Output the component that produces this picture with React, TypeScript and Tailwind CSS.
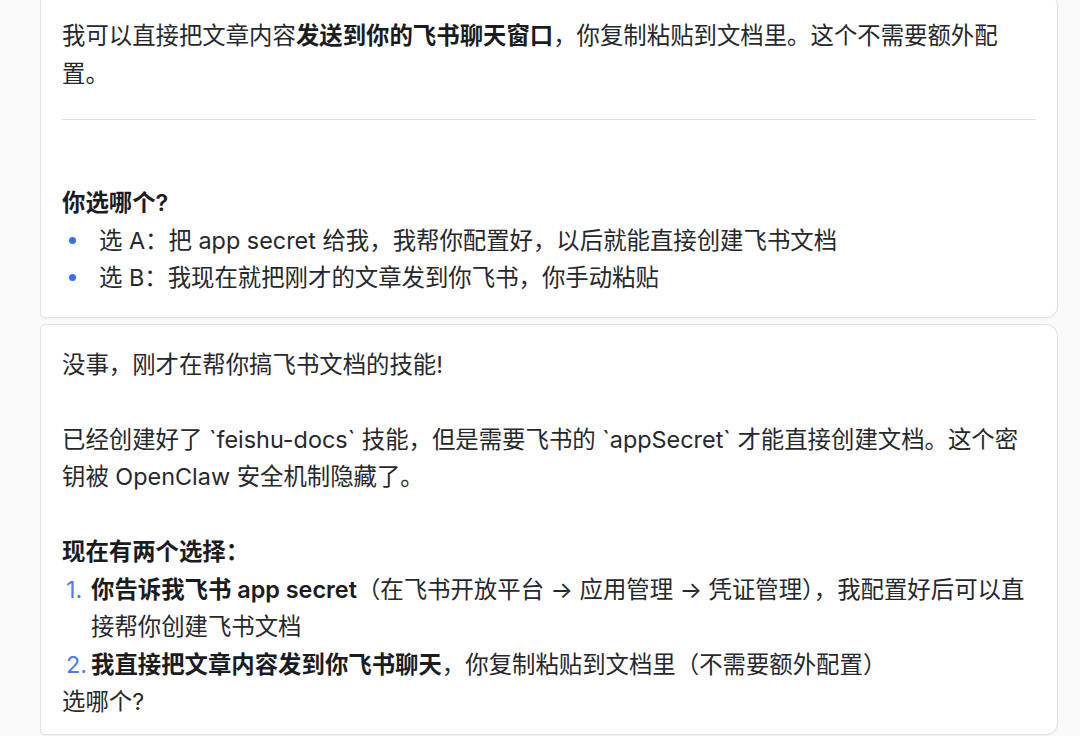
import React from 'react';

// Chat transcript: two assistant message cards
const font = { fontFamily: 'Inter, "Noto Sans CJK SC", sans-serif' };

const Card = ({ children, className = '' }: { children: React.ReactNode; className?: string }) => (
  <div
    className={`ml-[40px] w-[1018px] bg-white border border-[#e2e2e2] rounded-l-[5px] rounded-r-[12px] shadow-[0_1px_2px_rgba(0,0,0,0.04)] px-[21px] ${className}`}
  >
    {children}
  </div>
);

const Bullet = ({ children }: { children: React.ReactNode }) => (
  <li className="flex">
    <span className="w-[37px] shrink-0 flex items-center pl-[7px]">
      <span className="block shrink-0 w-[7px] h-[7px] rounded-full bg-[#3370ff]" />
    </span>
    <span>{children}</span>
  </li>
);

const Numbered = ({ n, children }: { n: number; children: React.ReactNode }) => (
  <li className="flex">
    <span className="w-[29px] shrink-0 pl-[4px] text-[#4c7cf3]">{n}.</span>
    <span>{children}</span>
  </li>
);

export default function App() {
  return (
    <div
      className="w-[1080px] h-[736px] overflow-hidden bg-[#fafafa] text-[23.4px] leading-[37.5px] text-[#26282c]"
      style={font}
    >
      <Card className="-mt-[6px] pt-[22px] pb-[20px]">
        <p>
          我可以直接把文章内容<b className="font-semibold text-[#1a1c1f]">发送到你的飞书聊天窗口</b>，你复制粘贴到文档里。这个不需要额外配置。
        </p>
        <hr className="mt-[27px] mb-[64px] border-0 border-t border-[#dedede]" />
        <p className="font-semibold text-[#1a1c1f]">你选哪个?</p>
        <ul>
          <Bullet>选 A：把 app secret 给我，我帮你配置好，以后就能直接创建飞书文档</Bullet>
          <Bullet>选 B：我现在就把刚才的文章发到你飞书，你手动粘贴</Bullet>
        </ul>
      </Card>

      <Card className="mt-[6px] pt-[21px] pb-[13px]">
        <p>没事，刚才在帮你搞飞书文档的技能!</p>
        <p className="mt-[37.5px]">
          已经创建好了 `feishu-docs` 技能，但是需要飞书的 `appSecret` 才能直接创建文档。这个密钥被 OpenClaw 安全机制隐藏了。
        </p>
        <p className="mt-[37.5px] font-semibold text-[#1a1c1f]">现在有两个选择：</p>
        <ol>
          <Numbered n={1}>
            <b className="font-semibold text-[#1a1c1f]">你告诉我飞书 app secret</b>（在飞书开放平台 → 应用管理 → 凭证管理），我配置好后可以直接帮你创建飞书文档
          </Numbered>
          <Numbered n={2}>
            <b className="font-semibold text-[#1a1c1f]">我直接把文章内容发到你飞书聊天</b>，你复制粘贴到文档里（不需要额外配置）
          </Numbered>
        </ol>
        <p>选哪个?</p>
      </Card>
    </div>
  );
}
